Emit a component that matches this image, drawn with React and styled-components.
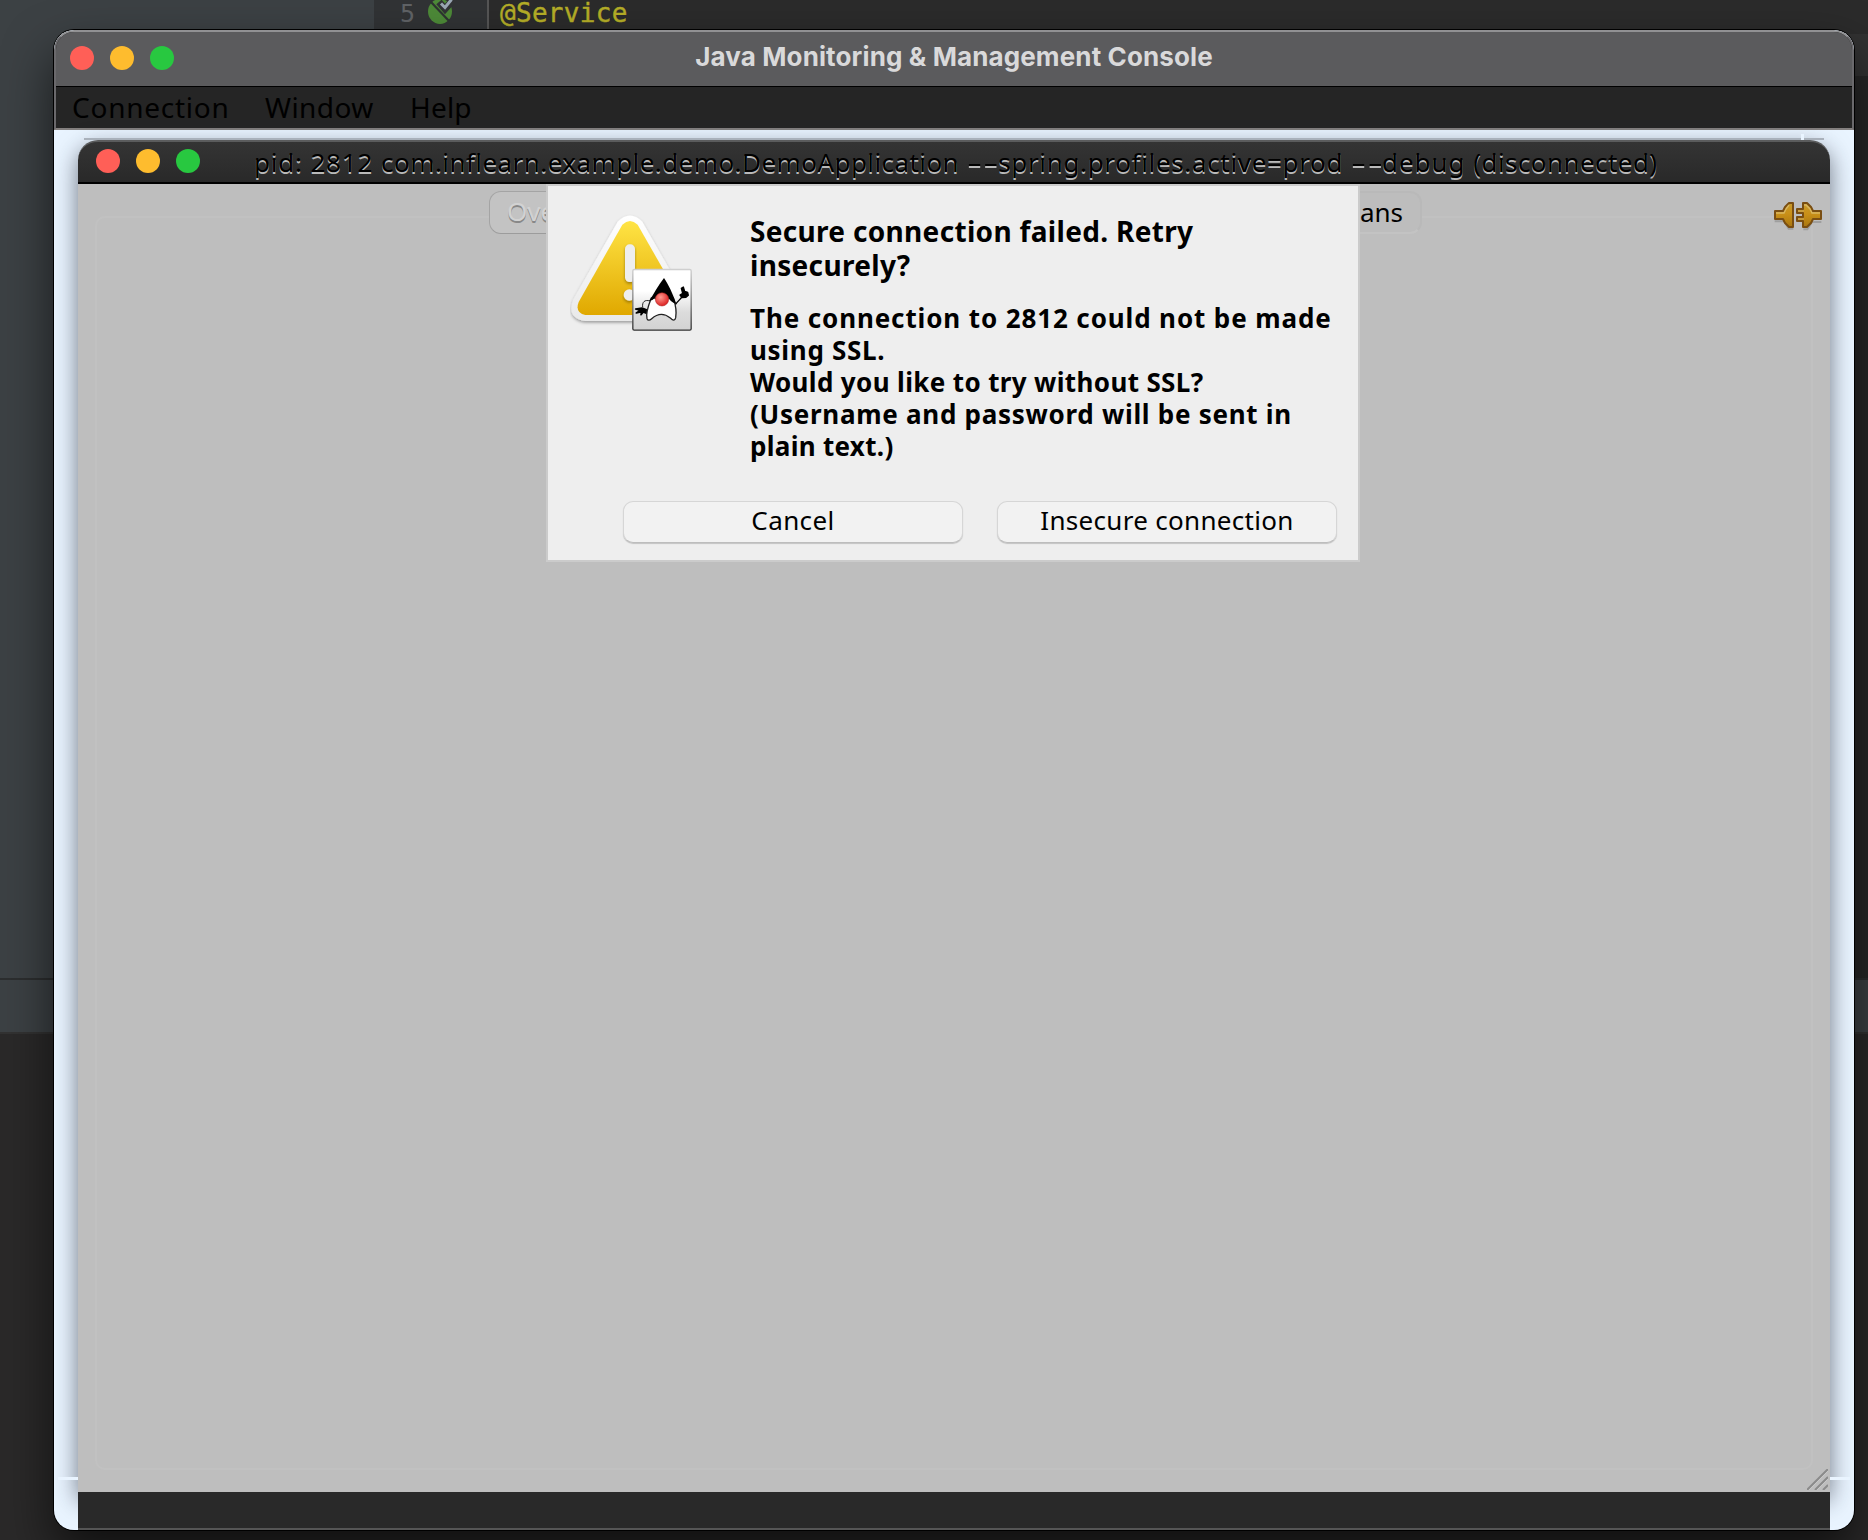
import React from "react";
import styled, { createGlobalStyle } from "styled-components";

const UI = `"Noto Sans", "Open Sans", sans-serif`;

const Global = createGlobalStyle`
  * { box-sizing: border-box; }
  body { margin: 0; background: #2b2b2b; }
`;

const Screen = styled.main`
  position: relative;
  width: 1868px;
  height: 1540px;
  overflow: hidden;
  font-family: ${UI};
`;

/* ---------- IDE behind the windows ---------- */
const Ide = styled.div`
  display: flex;
  flex-direction: column;
  height: 100%;
  background: #2a2929;
`;
const IdeTop = styled.div`
  display: flex;
  height: 978px;
`;
const ProjectPane = styled.div`
  width: 374px;
  background: #3c4144;
`;
const Gutter = styled.div`
  display: flex;
  width: 115px;
  padding-left: 26px;
  background: #313335;
  border-right: 2px solid #555555;
`;
const LineNumber = styled.span`
  width: 28px;
  color: #606366;
  font: 25px/28px "DejaVu Sans Mono", monospace;
  letter-spacing: -0.5px;
`;
const Editor = styled.div`
  flex: 1;
  padding-left: 11px;
  background: linear-gradient(#2b2b2b 34px, #323232 34px, #323232 76px, #272727 76px);
`;
const Annotation = styled.span`
  display: block;
  color: #b5ae27;
  font: 26px/26px "DejaVu Sans Mono", monospace;
  letter-spacing: 0.3px;
  -webkit-text-stroke: 0.4px #b5ae27;
`;
const IdeStrip = styled.div`
  height: 56px;
  background: #3c4144;
  border-top: 2px solid #2c2e2f;
  border-bottom: 2px solid #323232;
`;

/* ---------- windows ---------- */
const ConsoleWindow = styled.section`
  position: absolute;
  left: 54px;
  top: 30px;
  width: 1800px;
  height: 1500px;
  display: flex;
  flex-direction: column;
  overflow: hidden;
  border-radius: 20px;
  background: #e9f4ff;
`;
const ConsoleShadow = styled.div`
  position: absolute;
  left: 54px;
  top: 30px;
  width: 1800px;
  height: 1500px;
  border-radius: 20px;
  box-shadow: 0 0 0 1px #000, 0 24px 50px rgba(0, 0, 0, 0.62);
`;
const Chrome = styled.div`
  height: 100px;
  border: 2px solid #6a696c;
  border-top-color: #919193;
  border-bottom-color: #84807f;
  border-radius: 20px 20px 0 0;
  background: #252525;
  overflow: hidden;
`;
const TitleBar = styled.header`
  display: grid;
  grid-template-columns: 150px 1fr 150px;
  align-items: center;
  height: 55px;
  padding: 0 14px 2px;
  background: #5b5b5d;
  border-bottom: 1px solid #000;
`;
const Lights = styled.div`
  display: flex;
  gap: 16px;
`;
const Light = styled.span`
  width: 24px;
  height: 24px;
  border-radius: 50%;
  background: ${(p) => p.$color};
`;
const WindowTitle = styled.h1`
  margin: 0;
  margin-top: -3px;
  text-align: center;
  color: #d9d9da;
  font: 700 26px/32px Inter, sans-serif;
  letter-spacing: ${(p) => p.$track}px;
  white-space: nowrap;
`;
const MenuBar = styled.nav`
  display: flex;
  height: 41px;
  padding-left: 16px;
`;
const MenuItem = styled.span`
  width: ${(p) => p.$width}px;
  color: #000;
  font-size: 28px;
  line-height: 40px;
  letter-spacing: ${(p) => p.$track}px;
  white-space: nowrap;
`;
const Desktop = styled.div`
  position: relative;
  flex: 1;
  padding: 10px 24px 0;
`;
const Seam = styled.i`
  position: absolute;
  left: ${(p) => p.$x}px;
  top: ${(p) => p.$y}px;
  width: ${(p) => p.$w}px;
  height: ${(p) => p.$h}px;
  background: ${(p) => p.$color};
`;
const Frame = styled.section`
  position: relative;
  height: 1352px;
  border-radius: 20px 20px 0 0;
  box-shadow: 0 8px 23px rgba(28, 34, 46, 0.6);
`;
const FrameTitle = styled.header`
  display: flex;
  align-items: center;
  height: 44px;
  padding: 0 0 2px 18px;
  border-top: 2px solid #5b5c5d;
  border-bottom: 2px solid #000;
  border-radius: 20px 20px 0 0;
  background: linear-gradient(#343434, #292929);
`;
const FrameText = styled.h2`
  display: flex;
  gap: 8px;
  margin: 1px 0 0 54px;
  color: #000;
  font-weight: 400;
  font-size: 26px;
  line-height: 32px;
  text-shadow: 0 2px 0 #b9b9b9;
  white-space: pre;
`;
const Word = styled.span`
  letter-spacing: ${(p) => p.$track}px;
`;
const Dashes = styled.span`
  display: inline-block;
  width: 31px;
  transform: scaleX(1.8);
  transform-origin: left center;
`;
const FrameBody = styled.div`
  display: flex;
  flex-direction: column;
  height: 1308px;
  padding: 7px 17px 22px;
  background: #bebebe;
`;
const TabRow = styled.div`
  display: flex;
  justify-content: space-between;
  height: 25px;
  padding-left: 394px;
  padding-right: 391px;
`;
const Tab = styled.span`
  position: relative;
  z-index: 1;
  width: 110px;
  height: 43px;
  padding: 0 17px;
  border-radius: 12px;
  border: ${(p) => (p.$active ? "1.5px solid #a4a4a4" : "2px solid #b9b9b9")};
  border-bottom-color: ${(p) => (p.$active ? "#9c9c9c" : "#c3c3c3")};
  background: ${(p) => (p.$active ? "#c3c3c3" : "#bdbdbd")};
  color: ${(p) => (p.$active ? "#d2d2d2" : "#000")};
  text-shadow: ${(p) => (p.$active ? "0 2px 0 #888888" : "none")};
  text-align: ${(p) => (p.$active ? "left" : "right")};
  font-size: 26px;
  line-height: 38px;
`;
const TabPane = styled.div`
  flex: 1;
  border: 2px solid #c1c1c1;
  border-radius: 10px;
`;
const PlugSlot = styled.div`
  position: absolute;
  right: 8px;
  top: 62px;
`;
const GripSlot = styled.div`
  position: absolute;
  right: 2px;
  bottom: 2px;
  line-height: 0;
`;
const FrameFoot = styled.div`
  position: relative;
  height: 38px;
  background: #292929;
  border-bottom: 2px solid #555555;
`;

/* ---------- alert sheet ---------- */
const Sheet = styled.div`
  position: absolute;
  z-index: 2;
  left: 468px;
  top: 44px;
  width: 814px;
  height: 378px;
  display: grid;
  grid-template-columns: 180px 1fr;
  grid-template-rows: 315px 1fr;
  padding-left: 22px;
  border: 2px solid #cbcbcb;
  background: #eeeeee;
`;
const AlertArt = styled.div`
  padding-top: 27px;
`;
const Message = styled.div`
  padding-top: 28px;
`;
const Heading = styled.p`
  margin: 0 0 20px;
  font-weight: 700;
  font-size: 28px;
  line-height: 34px;
`;
const Body = styled.p`
  margin: 0;
  font-weight: 700;
  font-size: 26px;
  line-height: 32px;
`;
const Line = styled.span`
  display: block;
  letter-spacing: ${(p) => p.$track}px;
  white-space: nowrap;
`;
const Actions = styled.div`
  grid-column: 1 / -1;
  display: flex;
  gap: 34px;
  padding-left: 53px;
`;
const Button = styled.button`
  width: 340px;
  height: 42px;
  padding: 0 0 4px;
  border: 1px solid #d6d6d6;
  border-bottom-color: #bdbdbd;
  border-radius: 10px;
  background: #f2f2f2;
  box-shadow: 0 1px 1px rgba(0, 0, 0, 0.18);
  color: #000;
  font: 26px/34px ${UI};
  letter-spacing: ${(p) => p.$track}px;
`;

const TrafficLights = () => (
  <Lights>
    <Light $color="#ff5f57" />
    <Light $color="#febc2e" />
    <Light $color="#28c840" />
  </Lights>
);

const BeanIcon = () => (
  <svg width="26" height="28" viewBox="0 0 26 28">
    <ellipse cx="12" cy="11.500" rx="12" ry="12.500" fill="#4d8a38" />
    <path d="M2.500 1.500L21 21" stroke="#2e3431" strokeWidth="2.200" />
    <path d="M11 2l6 7 8-9" fill="none" stroke="#313335" strokeWidth="7" />
    <path d="M13 3.500l4 4 6.500-8" fill="none" stroke="#9aa7b4" strokeWidth="3" />
  </svg>
);

const PlugIcon = () => (
  <svg width="48" height="30" viewBox="0 0 144 90">
    <defs>
      <linearGradient id="brass" x1="0" y1="0" x2="0" y2="1">
        <stop offset="0" stopColor="#c89b2c" />
        <stop offset="0.45" stopColor="#c99018" />
        <stop offset="1" stopColor="#a87610" />
      </linearGradient>
    </defs>
    <path d="M2 58H32L44 80H58M88 82H100L114 60H142" fill="none" stroke="#8b8b8b" strokeWidth="6" opacity=".6" />
    <g fill="url(#brass)" stroke="#7a4e12" strokeWidth="6" strokeLinejoin="round">
      <path d="M3 27H27L33 15L45 3H57V75H45L33 63L27 51H3Z" />
      <path d="M87 3H99L111 15L117 27H141V51H117L111 63L99 75H87V57H69V45H87V33H69V21H87Z" />
    </g>
    <path d="M6 33H30L36 21L45 9M90 9H96L108 21L114 33H138" fill="none" stroke="#d9b660" strokeWidth="4" />
    <path d="M72 27H90M72 51H90" stroke="#c9a24a" strokeWidth="5" />
  </svg>
);

const Grip = () => (
  <svg width="21" height="21" viewBox="0 0 21 21">
    <path d="M0 21L21 0M8 21L21 8M16 21L21 16" stroke="#8b8b8b" strokeWidth="2" />
    <path d="M2 21L21 2M10 21L21 10" stroke="#cfcfcf" strokeWidth="0.700" />
  </svg>
);

const WarningDuke = () => (
  <svg width="123" height="120" viewBox="90 99 369 360">
    <defs>
      <linearGradient id="amber" x1="0" y1="0" x2="0" y2="1">
        <stop offset="0" stopColor="#ffe445" />
        <stop offset="1" stopColor="#e0a800" />
      </linearGradient>
      <linearGradient id="rim" x1="0" y1="0" x2="0" y2="1">
        <stop offset="0" stopColor="#ffffff" />
        <stop offset="1" stopColor="#e9e9e9" />
      </linearGradient>
      <linearGradient id="card" x1="0" y1="0" x2="0" y2="1">
        <stop offset="0.35" stopColor="#ffffff" />
        <stop offset="0.7" stopColor="#dcdcdc" />
        <stop offset="1" stopColor="#d2d2d2" />
      </linearGradient>
      <linearGradient id="cardEdge" x1="0" y1="0" x2="0" y2="1">
        <stop offset="0" stopColor="#cfcfcf" />
        <stop offset="1" stopColor="#333333" />
      </linearGradient>
      <radialGradient id="nose" cx="0.4" cy="0.35" r="0.65">
        <stop offset="0" stopColor="#ff9a90" />
        <stop offset="1" stopColor="#dc2222" />
      </radialGradient>
      <filter id="soft" x="-10%" y="-10%" width="120%" height="125%">
        <feDropShadow dx="0" dy="5" stdDeviation="4" floodOpacity="0.35" />
      </filter>
    </defs>
    <path
      d="M233 125Q270 88 307 125L440 358Q462 412 404 423H136Q78 414 100 358Z"
      fill="url(#rim)"
      filter="url(#soft)"
    />
    <path
      d="M247 134Q270 112 293 134L424 364Q436 396 404 405H136Q104 398 116 366Z"
      fill="url(#amber)"
    />
    <g fill="#eeeeee" filter="url(#soft)">
      <rect x="255" y="193" width="30" height="113" rx="14" />
      <circle cx="268" cy="345" r="17" />
    </g>
    <rect x="278.500" y="268.500" width="175" height="182" rx="4" fill="url(#card)" stroke="url(#cardEdge)" strokeWidth="4" />
    <path d="M330 363C314 358 306 366 308 381" fill="none" stroke="#000" strokeWidth="2.500" />
    <path d="M321 390L306 384L287 387L302 391L289 399L305 395L303 404L310 396L319 400Z" fill="#000" stroke="#000" strokeWidth="5" strokeLinejoin="round" />
    <path d="M406 374C414 362 420 360 427 349" fill="none" stroke="#000" strokeWidth="4" />
    <path d="M424 325L430 321L434 334L443 337L445 346L438 352L426 353L420 345L428 340Z" fill="#000" stroke="#000" strokeWidth="4" strokeLinejoin="round" />
    <path
      d="M334 354C326 374 317 402 321 416Q325 425 335 416Q363 391 391 414Q404 427 407 413C410 396 406 372 400 354Z"
      fill="#fff"
      stroke="#222"
      strokeWidth="4"
    />
    <path d="M372 294C385 313 398 340 409 372Q392 366 386 354L345 353Q338 362 327 363C342 342 354 316 372 294Z" fill="#000" />
    <circle cx="366" cy="358" r="20" fill="url(#nose)" stroke="#a51c1c" strokeWidth="1.500" />
  </svg>
);

export default function App() {
  return (
    <Screen>
      <Global />
      <Ide>
        <IdeTop>
          <ProjectPane />
          <Gutter>
            <LineNumber>5</LineNumber>
            <BeanIcon />
          </Gutter>
          <Editor>
            <Annotation>@Service</Annotation>
          </Editor>
        </IdeTop>
        <IdeStrip />
      </Ide>

      <ConsoleShadow />
      <ConsoleWindow>
        <Chrome>
          <TitleBar>
            <TrafficLights />
            <WindowTitle $track={0.12}>Java Monitoring &amp; Management Console</WindowTitle>
          </TitleBar>
          <MenuBar>
            <MenuItem $width={193} $track={0.75}>Connection</MenuItem>
            <MenuItem $width={145} $track={0.4}>Window</MenuItem>
            <MenuItem $width={80} $track={0.2}>Help</MenuItem>
          </MenuBar>
        </Chrome>
        <Desktop>
          <Frame>
            <FrameTitle>
              <TrafficLights />
              <FrameText>
                <Word $track={0.8}>pid: 2812</Word>
                <Word $track={0.43}>com.inflearn.example.demo.DemoApplication</Word>
                <Word $track={0.66}>
                  <Dashes>--</Dashes>spring.profiles.active=prod
                </Word>
                <Word $track={0.9}>
                  <Dashes>--</Dashes>debug
                </Word>
                <Word $track={0.43}>(disconnected)</Word>
              </FrameText>
            </FrameTitle>
            <FrameBody>
              <TabRow>
                <Tab $active>Ove</Tab>
                <Tab>ans</Tab>
              </TabRow>
              <TabPane />
            </FrameBody>
            <PlugSlot>
              <PlugIcon />
            </PlugSlot>
            <GripSlot>
              <Grip />
            </GripSlot>
            <Sheet role="alertdialog">
              <AlertArt>
                <WarningDuke />
              </AlertArt>
              <Message>
                <Heading>
                  <Line $track={0.32}>Secure connection failed. Retry</Line>
                  <Line $track={0.32}>insecurely?</Line>
                </Heading>
                <Body>
                  <Line $track={0.88}>The connection to 2812 could not be made</Line>
                  <Line $track={0.7}>using SSL.</Line>
                  <Line $track={0.36}>Would you like to try without SSL?</Line>
                  <Line $track={0.72}>(Username and password will be sent in</Line>
                  <Line $track={0.3}>plain text.)</Line>
                </Body>
              </Message>
              <Actions>
                <Button $track={0.4}>Cancel</Button>
                <Button $track={0.3}>Insecure connection</Button>
              </Actions>
            </Sheet>
          </Frame>
          <FrameFoot />
          <Seam $x={30} $y={8} $w={1740} $h={2} $color="#a9b1bb" />
          <Seam $x={1747} $y={4} $w={3} $h={6} $color="#e9f4ff" />
          <Seam $x={4} $y={1347} $w={20} $h={3} $color="#e9f4ff" />
          <Seam $x={1776} $y={1347} $w={20} $h={3} $color="#e9f4ff" />
        </Desktop>
      </ConsoleWindow>
    </Screen>
  );
}
